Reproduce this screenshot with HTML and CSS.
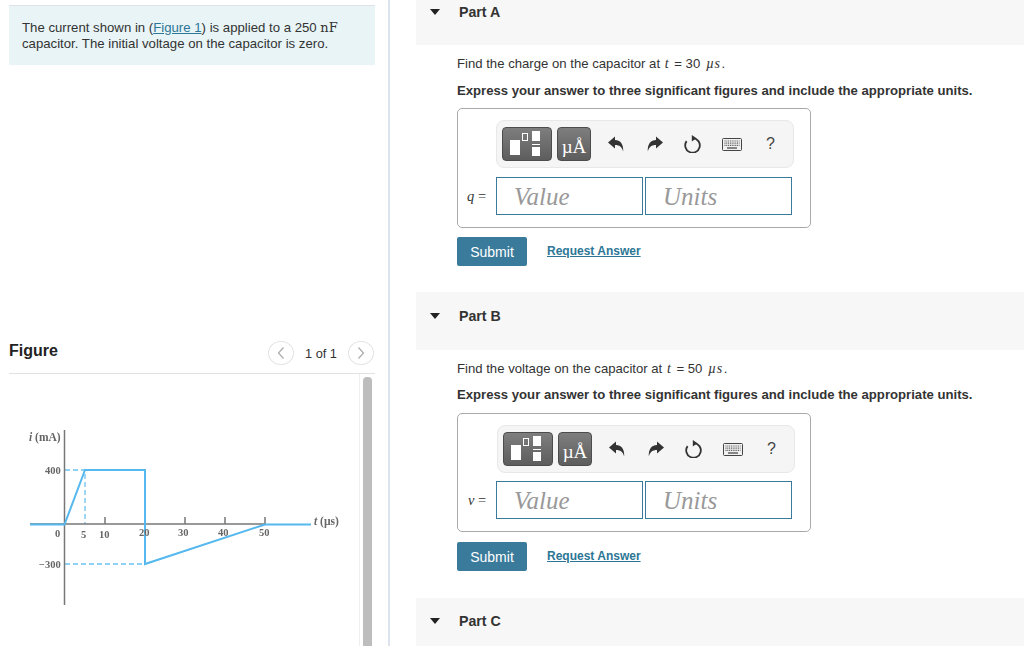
FILE: index.html
```html
<!DOCTYPE html>
<html lang="en">
<head>
  <meta charset="UTF-8" />
  <title>Capacitor problem</title>
  <link rel="stylesheet" href="styles.css">
</head>
<body>
  <svg class="defs" width="0" height="0">
    <symbol id="undo" viewBox="0 0 18 18"><path d="M1 7.500 8 1.500V5c5 .2 8.600 3.500 8.200 11.500C15 12 12.500 10 8 10v3.500z"/></symbol>
    <symbol id="redo" viewBox="0 0 18 18"><path d="M17 7.500 10 1.500V5C5 5.200 1.400 8.500 1.800 16.500 3 12 5.500 10 10 10v3.500z"/></symbol>
    <symbol id="reset" viewBox="0 0 18 18"><path d="M10 3.100a7.300 7.300 0 1 1-6.400 3" fill="none" stroke="#333" stroke-width="1.800"/><path d="M8.800 0 13.500 3.200 8.800 6.600z"/></symbol>
    <symbol id="keys" viewBox="0 0 20 13"><rect x=".5" y=".5" width="19" height="12" rx="1" fill="#f1f1f1" stroke="#444"/><path d="M2.500 3h15M2.500 5.200h15M2.500 7.400h15" stroke="#555" stroke-width="1.200" stroke-dasharray="1 .8"/><path d="M5 10h10" stroke="#555" stroke-width="1.400"/></symbol>
    <symbol id="prev" viewBox="0 0 10 14"><path d="M7.500 1.500 2.500 7l5 5.500" fill="none" stroke="#aaa" stroke-width="1.200"/></symbol>
    <symbol id="next" viewBox="0 0 10 14"><path d="M2.500 1.500 7.500 7l-5 5.500" fill="none" stroke="#aaa" stroke-width="1.200"/></symbol>
  </svg>

  <div class="page">
    <aside class="left">
      <div class="intro">
        The current shown in (<a href="#fig">Figure 1</a>) is applied to a 250 <span class="unit">nF</span>
        capacitor. The initial voltage on the capacitor is zero.
      </div>

      <div class="fig-head">
        <h2>Figure</h2>
        <div class="pager">
          <span class="round"><svg class="chev"><use href="#prev"/></svg></span>
          <span class="count">1 of 1</span>
          <span class="round"><svg class="chev"><use href="#next"/></svg></span>
        </div>
      </div>

      <div class="fig-body" id="fig">
        <svg class="graph" width="350" height="273" viewBox="9 374 350 273">
          <g class="dash">
            <path d="M65 470H85V524"/>
            <path d="M65 564H145"/>
          </g>
          <g class="axis">
            <path d="M64.500 430V605"/>
            <path d="M30 524H265"/>
            <path d="M105 517V524M145 517V524M185 517V524M225 517V524M265 517V524"/>
          </g>
          <path class="curve" d="M30 524.500H64.500L85 470H145V564L265 524.500H311"/>
          <g class="labels">
            <text x="29" y="441" class="it">i <tspan class="up">(mA)</tspan></text>
            <text x="45" y="474">400</text>
            <text x="55" y="537">0</text>
            <text x="81" y="538">5</text>
            <text x="99" y="538">10</text>
            <text x="139" y="536">20</text>
            <text x="178" y="536">30</text>
            <text x="218" y="536">40</text>
            <text x="259" y="536">50</text>
            <text x="39" y="568">−300</text>
            <text x="314" y="525" class="it">t <tspan class="up">(µs)</tspan></text>
          </g>
        </svg>
        <div class="scroll"><div class="thumb"></div></div>
      </div>
    </aside>

    <main class="right">
      <section class="part part-a">
        <div class="part-head"><span class="arrow"></span><h3>Part A</h3></div>
        <div class="part-body">
          <p class="q">Find the charge on the capacitor at <i class="m">t</i> = 30 <i class="m mu">µs</i>.</p>
          <p class="express">Express your answer to three significant figures and include the appropriate units.</p>
          <div class="answer">
            <div class="toolbar">
              <span class="tool tool-wide">
                <span class="b-big"></span><span class="b-small"></span>
                <span class="b-frac"><span></span><span class="bar"></span><span></span></span>
              </span>
              <span class="tool tool-unit">µÅ</span>
              <svg class="ic"><use href="#undo"/></svg>
              <svg class="ic"><use href="#redo"/></svg>
              <svg class="ic ic-reset"><use href="#reset"/></svg>
              <svg class="ic ic-keys"><use href="#keys"/></svg>
              <span class="help">?</span>
            </div>
            <div class="inputs">
              <span class="var"><i>q</i> =</span>
              <span class="field">Value</span>
              <span class="field">Units</span>
            </div>
          </div>
          <div class="actions">
            <button>Submit</button>
            <a href="#a">Request Answer</a>
          </div>
        </div>
      </section>

      <section class="part part-b">
        <div class="part-head"><span class="arrow"></span><h3>Part B</h3></div>
        <div class="part-body">
          <p class="q">Find the voltage on the capacitor at <i class="m">t</i> = 50 <i class="m mu">µs</i>.</p>
          <p class="express">Express your answer to three significant figures and include the appropriate units.</p>
          <div class="answer">
            <div class="toolbar">
              <span class="tool tool-wide">
                <span class="b-big"></span><span class="b-small"></span>
                <span class="b-frac"><span></span><span class="bar"></span><span></span></span>
              </span>
              <span class="tool tool-unit">µÅ</span>
              <svg class="ic"><use href="#undo"/></svg>
              <svg class="ic"><use href="#redo"/></svg>
              <svg class="ic ic-reset"><use href="#reset"/></svg>
              <svg class="ic ic-keys"><use href="#keys"/></svg>
              <span class="help">?</span>
            </div>
            <div class="inputs">
              <span class="var"><i>v</i> =</span>
              <span class="field">Value</span>
              <span class="field">Units</span>
            </div>
          </div>
          <div class="actions">
            <button>Submit</button>
            <a href="#b">Request Answer</a>
          </div>
        </div>
      </section>

      <section class="part part-c">
        <div class="part-head"><span class="arrow"></span><h3>Part C</h3></div>
      </section>
    </main>
  </div>
</body>
</html>
```

FILE: styles.css
```css
html, body {
  margin: 0;
  padding: 0;
  height: 646px;
  overflow: hidden;
  background: #fff;
}
body {
  font-family: "Liberation Sans", Arial, sans-serif;
  font-size: 13.15px;
  color: #333;
}
.defs {
  display: block;
  height: 0;
}
.page {
  display: flex;
  height: 646px;
  overflow: hidden;
}

/* left column */
.left {
  box-sizing: border-box;
  width: 390px;
  height: 646px;
  flex: none;
  padding: 5px 13px 0 9px;
  border-right: 2px solid #dce2ee;
}
.intro {
  height: 44px;
  padding: 14px 13px 1px;
  line-height: 16px;
  font-size: 13.2px;
  background: #e8f4f6;
  border-top: 1px solid #dfe3e8;
}
.intro a {
  color: #2d7696;
}
.unit {
  font-family: "DejaVu Serif", serif;
  font-size: 13px;
}
.fig-head {
  display: flex;
  align-items: center;
  justify-content: space-between;
  height: 33px;
  margin-top: 275px;
  border-bottom: 1px solid #e2e2e2;
}
.fig-head h2 {
  margin: 0;
  font-size: 16px;
  color: #222;
  padding-bottom: 12px;
}
.pager {
  display: flex;
  align-items: center;
  margin-right: 1px;
  padding-bottom: 8px;
}
.round {
  box-sizing: border-box;
  display: flex;
  align-items: center;
  justify-content: center;
  width: 26px;
  height: 24px;
  border: 1px solid #e4e4e4;
  border-radius: 50%;
}
.chev {
  width: 10px;
  height: 14px;
}
.count {
  margin: 2px 11px 0;
  font-size: 12.800px;
}
.fig-body {
  display: flex;
  height: 273px;
}
.graph {
  display: block;
  flex: none;
  filter: blur(.35px);
}
.dash path {
  fill: none;
  stroke: #6cc3ef;
  stroke-width: 1.300;
  stroke-dasharray: 5 3;
}
.axis path {
  fill: none;
  stroke: #777;
  stroke-width: 1.500;
}
.curve {
  fill: none;
  stroke: #55b8ee;
  stroke-width: 2;
}
.labels text {
  font-family: "Liberation Serif", serif;
  font-size: 10.500px;
  font-weight: bold;
  fill: #666;
}
.labels .it {
  font-size: 11.500px;
  font-style: italic;
}
.labels .up {
  font-style: normal;
}
.scroll {
  box-sizing: border-box;
  width: 16px;
  padding: 3px 3px 0;
  border-left: 1px solid #eee;
}
.thumb {
  height: 100%;
  width: 9px;
  background: #bdbdbd;
  border-radius: 4px 4px 0 0;
}

/* right column */
.right {
  flex: 1;
  margin-left: 26px;
}
.part-head {
  display: flex;
  align-items: flex-start;
  height: 58px;
  background: #f7f7f7;
  box-sizing: border-box;
  padding: 16px 0 0 14px;
}
.part-a .part-head {
  height: 45px;
  padding-top: 4px;
}
.part-c .part-head {
  height: 48px;
  padding-top: 15px;
}
.part-head h3 {
  margin: 0 0 0 19px;
  font-size: 14.200px;
  line-height: 16px;
  color: #333;
}
.arrow {
  width: 0;
  height: 0;
  margin-top: 5px;
  border-left: 5.500px solid transparent;
  border-right: 5.500px solid transparent;
  border-top: 6px solid #222;
}
.part-body {
  padding: 11px 0 0 41px;
}
.q {
  margin: 0;
  line-height: 15px;
}
.m {
  font-family: "Liberation Serif", serif;
  font-size: 14px;
  margin: 0 2px 0 1px;
}
.mu {
  margin: 0 1px 0 2px;
  letter-spacing: .6px;
}
.express {
  margin: 11px 0 0;
  line-height: 15px;
  font-weight: bold;
}
.answer {
  box-sizing: border-box;
  width: 354px;
  height: 120px;
  margin-top: 11px;
  padding: 11px 18px 0 38px;
  border: 1px solid #aaa;
  border-radius: 5px;
}
.part-a .express {
  margin-top: 12px;
}
.part-a .answer {
  margin-top: 10px;
}
.toolbar {
  box-sizing: border-box;
  display: flex;
  align-items: center;
  width: 298px;
  height: 48px;
  padding-left: 5px;
  background: #f5f5f5;
  border: 1px solid #e8e8e8;
  border-radius: 8px;
}
.tool {
  box-sizing: border-box;
  position: relative;
  display: block;
  flex: none;
  height: 34px;
  background: linear-gradient(#7e7e7e, #5d5d5d);
  border: 1px solid #4c4c4c;
  border-radius: 4px;
  color: #fff;
}
.tool-wide {
  width: 50px;
}
.tool-unit {
  width: 34px;
  margin-left: 5px;
  margin-right: 8px;
  font-family: "Liberation Serif", serif;
  font-size: 19px;
  line-height: 37px;
  text-align: center;
}
.b-big {
  position: absolute;
  left: 7px;
  top: 12px;
  width: 10px;
  height: 15px;
  background: #fff;
}
.b-small {
  position: absolute;
  left: 19px;
  top: 5px;
  width: 4px;
  height: 6px;
  border: 1px solid #fff;
}
.b-frac {
  position: absolute;
  left: 29px;
  top: 3px;
  width: 8px;
}
.b-frac span {
  display: block;
  width: 8px;
  height: 10px;
  background: #fff;
}
.b-frac span:last-child {
  height: 9px;
}
.b-frac .bar {
  height: 1px;
  margin: 3px 0 2px;
}
.ic {
  flex: none;
  width: 18px;
  height: 18px;
  margin-left: 8px;
  margin-right: 13px;
  fill: #333;
}
.ic-reset {
  margin-left: 6px;
  margin-right: 14px;
}
.ic-keys {
  width: 20px;
  height: 13px;
  margin-left: 7px;
  margin-right: 23px;
}
.help {
  font-size: 16px;
  color: #444;
  margin-left: 1px;
}
.inputs {
  display: flex;
  align-items: center;
  gap: 2px;
  margin-top: 9px;
  margin-left: -29px;
}
.var {
  width: 27px;
  font-family: "Liberation Serif", serif;
  font-size: 14.500px;
}
.field {
  box-sizing: border-box;
  flex: none;
  width: 147px;
  height: 38px;
  padding-left: 17px;
  line-height: 37px;
  border: 1px solid #3a7b9c;
  font-family: "Liberation Serif", serif;
  font-style: italic;
  font-size: 25px;
  color: #999;
}
.actions {
  display: flex;
  align-items: center;
  gap: 20px;
  margin-top: 9px;
}
.actions button {
  width: 70px;
  height: 29px;
  padding: 0;
  border: none;
  border-radius: 2px;
  background: #3a7b9c;
  color: #fff;
  font-family: inherit;
  font-size: 14px;
}
.actions a {
  color: #2d7696;
  font-size: 12px;
  font-weight: bold;
  margin-bottom: 1px;
}
.part-a {
  height: 292px;
}
.part-b {
  height: 306px;
}
.part-b .answer {
  height: 119px;
  padding-left: 39px;
}
.part-b .inputs {
  margin-top: 8px;
}
.part-b .actions {
  margin-top: 10px;
}
```
